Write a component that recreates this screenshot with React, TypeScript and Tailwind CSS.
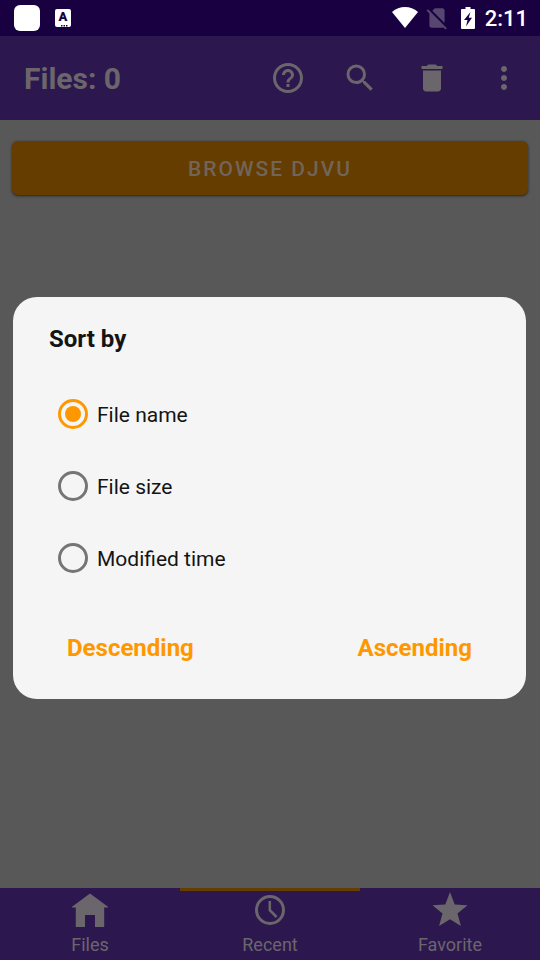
import React, { useState } from "react";
import { MdDelete, MdHelpOutline, MdMoreVert, MdNoSim, MdSearch } from "react-icons/md";

const sortOptions = ["File name", "File size", "Modified time"];

function WifiIcon() {
  return (
    <svg width="26" height="21" viewBox="0 0 26 21" fill="currentColor" aria-hidden="true">
      <path d="M13 21 0 5C3.8 1.7 8.2 0 13 0s9.200 1.700 13 5z" />
    </svg>
  );
}

function BatteryIcon() {
  return (
    <svg width="14" height="22" viewBox="0 0 14 22" aria-hidden="true">
      <path fill="currentColor" d="M4.500 0h5v2H13a1 1 0 0 1 1 1v18a1 1 0 0 1-1 1H1a1 1 0 0 1-1-1V3a1 1 0 0 1 1-1h3.500z" />
      <path fill="#190041" d="M9.500 5 3 13h3.500L5 19.500 11 10.800H7.700z" />
    </svg>
  );
}

function HomeIcon() {
  return (
    <svg width="36" height="36" viewBox="0 0 36 36" fill="currentColor" aria-hidden="true">
      <path d="M18 1.500 0 14.800v.7h3.800V35H13V23h10v12h9.200V15.500H36v-.7z" />
    </svg>
  );
}

function ClockIcon() {
  return (
    <svg width="36" height="36" viewBox="0 0 36 36" fill="none" stroke="currentColor" strokeWidth="3" aria-hidden="true">
      <circle cx="18" cy="18" r="13.500" />
      <path strokeWidth="2.500" d="M17.800 9v9.200l6.800 6.800" />
    </svg>
  );
}

function StarIcon() {
  return (
    <svg width="36" height="36" viewBox="0 0 36 36" fill="currentColor" aria-hidden="true">
      <path d="m18 0 4.700 12.500 12.800.7-10 8.200 3.400 12.600L18 27.200 7.100 34l3.400-12.600-10-8.200 12.800-.7z" />
    </svg>
  );
}

const tabs = [
  { name: "Files", icon: <HomeIcon /> },
  { name: "Recent", icon: <ClockIcon /> },
  { name: "Favorite", icon: <StarIcon /> },
];

const actions = [
  { name: "Help", icon: <MdHelpOutline size={36} /> },
  { name: "Search", icon: <MdSearch size={36} /> },
  { name: "Delete", icon: <MdDelete size={36} /> },
  { name: "More options", icon: <MdMoreVert size={36} /> },
];

export default function App() {
  const [sortBy, setSortBy] = useState("File name");
  const [activeTab, setActiveTab] = useState("Recent");

  return (
    <div className="flex min-h-screen flex-col bg-[#585858] font-['Roboto',sans-serif]">
      {/* status bar */}
      <div className="flex h-9 items-center justify-between bg-[#190041] pr-3 pl-[14px] text-white">
        <div className="flex items-center gap-[15px]">
          <span className="size-[26px] rounded-md bg-white" />
          <span className="flex h-[18px] w-4 flex-col items-center rounded-xs bg-white text-[#190041]">
            <span className="text-[13px] leading-4 font-black">A</span>
            <svg width="10" height="2" viewBox="0 0 10 2" fill="currentColor" aria-hidden="true">
              <path d="M3 0h1.500v1.500H3zM5.500 0H7v1.500H5.500zM8 0h1.500v1.500H8z" />
            </svg>
          </span>
        </div>
        <div className="flex items-center">
          <div className="flex items-center pb-px">
            <WifiIcon />
            <MdNoSim size={26} className="mr-[11px] ml-[6px] text-[#574770]" />
            <BatteryIcon />
          </div>
          <span className="ml-[10px] pt-0.5 text-[22px] leading-8 font-medium">2:11</span>
        </div>
      </div>

      <div className="relative flex flex-1 flex-col">
        <header className="flex h-[84px] items-center justify-between bg-[#2c184f] pl-6 text-[#6b666b]">
          <h1 className="text-[30px] font-bold">Files: 0</h1>
          <div className="flex">
            {actions.map((action) => (
              <button key={action.name} aria-label={action.name} className="flex h-[72px] w-[72px] items-center justify-center">
                {action.icon}
              </button>
            ))}
          </div>
        </header>

        <main className="flex-1 px-3 py-[21px]">
          <button className="h-[54px] w-full rounded-md bg-[#663d00] pt-[3px] text-[21px] font-medium tracking-[2px] text-[#706558] shadow-sm shadow-black/50">
            BROWSE DJVU
          </button>
        </main>

        <nav className="flex h-[72px] bg-[#2c184f] text-[#6b666b]">
          {tabs.map((tab) => (
            <button
              key={tab.name}
              onClick={() => setActiveTab(tab.name)}
              className={`flex flex-1 flex-col items-center gap-[5px] border-t-3 pt-px ${activeTab === tab.name ? "border-[#663d00]" : "border-transparent"}`}
            >
              {tab.icon}
              <span className="text-lg leading-6">{tab.name}</span>
            </button>
          ))}
        </nav>

        {/* sort dialog */}
        <div className="absolute inset-0 flex items-center pr-[14px] pl-[13px]">
          <form
            role="dialog"
            aria-labelledby="sort-title"
            onSubmit={(e) => e.preventDefault()}
            className="w-full rounded-3xl bg-[#f5f5f5] px-9 pt-6 pb-[15px] text-[#141414]"
          >
            <h2 id="sort-title" className="text-2xl leading-9 font-bold">Sort by</h2>
            <div className="mt-[21px] pl-[9px]">
              {sortOptions.map((option) => (
                <label key={option} className="flex h-[72px] items-center gap-[9px] text-[21px]">
                  <input
                    type="radio"
                    name="sort"
                    checked={sortBy === option}
                    onChange={() => setSortBy(option)}
                    className="grid size-[30px] appearance-none place-content-center rounded-full border-3 border-[#757575] before:size-4 before:rounded-full checked:border-[#ff9800] checked:before:bg-[#ff9800]"
                  />
                  <span className="pt-[3px]">{option}</span>
                </label>
              ))}
            </div>
            <div className="mt-[18px] flex justify-between px-[18px] text-2xl font-bold text-[#ff9800]">
              <button className="h-[72px]">Descending</button>
              <button className="h-[72px]">Ascending</button>
            </div>
          </form>
        </div>
      </div>
    </div>
  );
}
